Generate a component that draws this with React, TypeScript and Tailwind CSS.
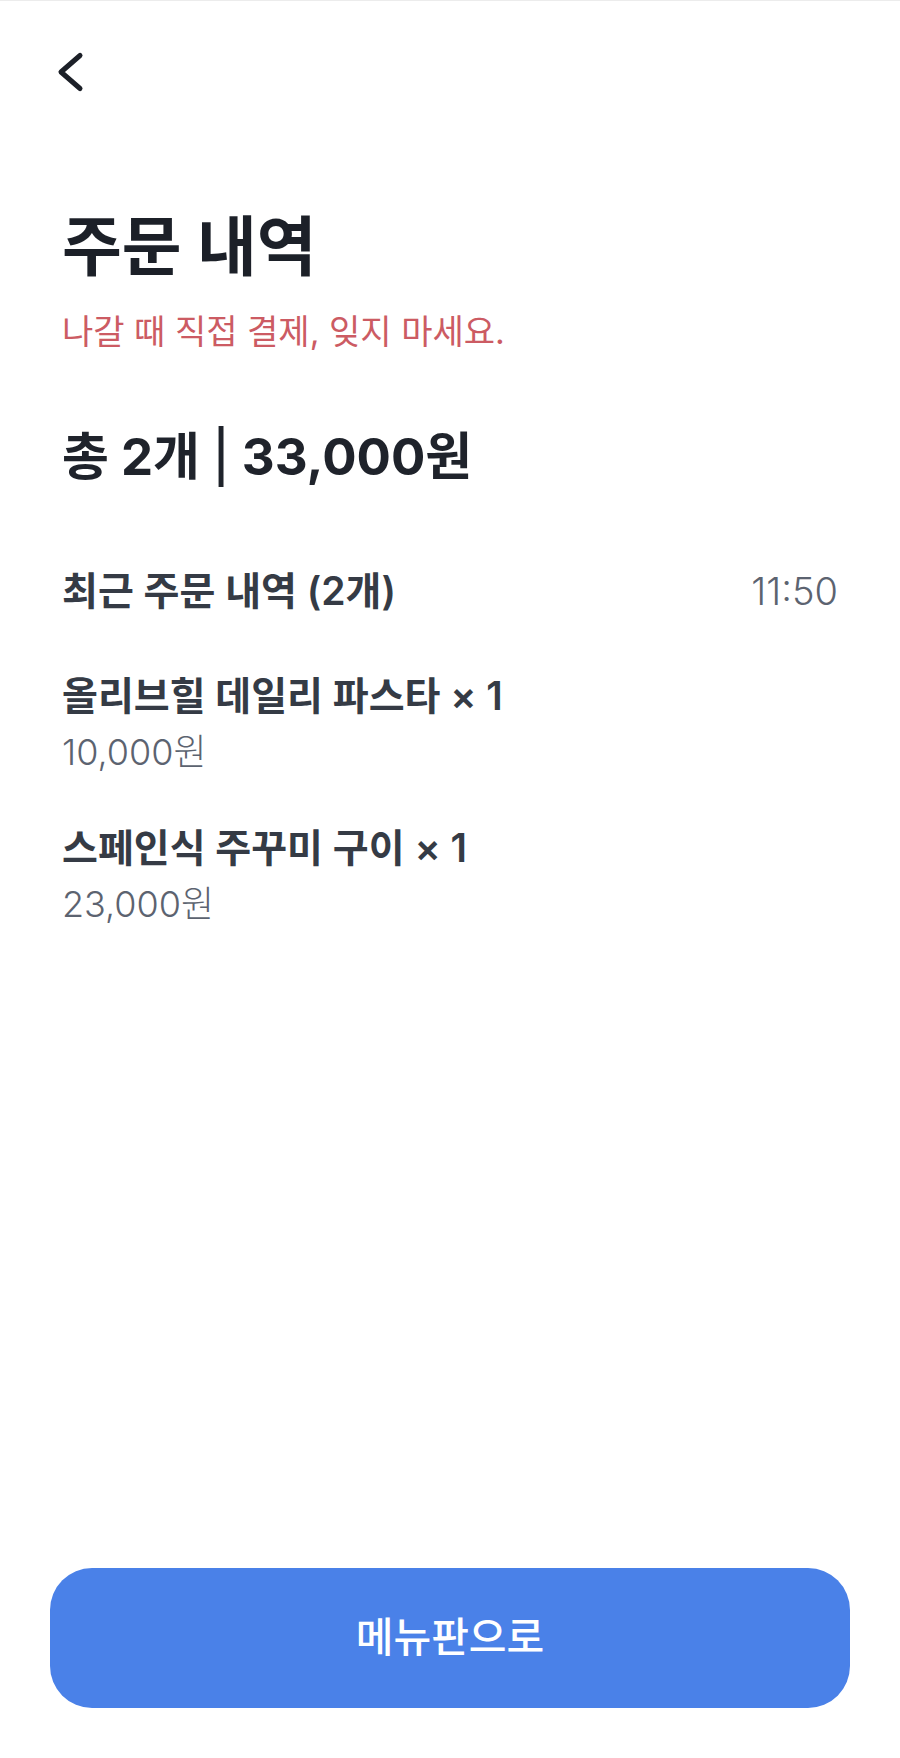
import React from "react";

const orders = [
  { name: "올리브힐 데일리 파스타", qty: 1, price: "10,000원" },
  { name: "스페인식 주꾸미 구이", qty: 1, price: "23,000원" },
];

const App: React.FC = () => {
  return (
    <div className="min-h-[1758px] bg-white border-t border-[#ececec] flex flex-col font-['Inter','Noto_Sans_CJK_KR',sans-serif]">
      {/* Top bar */}
      <header className="pl-[55px] pt-[50px]">
        <button className="block w-[32px] h-[42px]" aria-label="뒤로">
          <svg width="32" height="42" viewBox="0 0 32 42" fill="none">
            <path
              d="M25 4.5 L6 21 L25 37.5"
              stroke="#1c2028"
              strokeWidth="5"
              strokeLinecap="round"
              strokeLinejoin="round"
            />
          </svg>
        </button>
      </header>

      <main className="px-[62px] flex flex-col">
        <h1 className="mt-[118px] text-[65px] leading-[72px] font-bold text-[#1c2028]">
          주문 내역
        </h1>
        <p className="mt-[29px] text-[34px] leading-[40px] text-[#cc5b63]">
          나갈 때 직접 결제, 잊지 마세요.
        </p>

        <p className="mt-[75px] text-[51px] leading-[60px] font-bold text-[#1f232b]">
          총 2개 <span className="font-medium">|</span> 33,000원
        </p>

        {/* Recent orders */}
        <section className="mt-[82px] flex flex-col">
          <div className="flex items-center justify-between">
            <h2 className="text-[39px] leading-[44px] font-semibold text-[#353b45]">
              최근 주문 내역 (2개)
            </h2>
            <span className="text-[38px] leading-[44px] font-light text-[#5c6370]">
              11:50
            </span>
          </div>

          <ul className="flex flex-col">
            {orders.map((item, i) => (
              <li key={i} className={i === 0 ? "mt-[61px]" : "mt-[54px]"}>
                <p className="text-[39px] leading-[44px] font-semibold text-[#353b45]">
                  {item.name} × {item.qty}
                </p>
                <p className="mt-[14px] text-[36px] leading-[40px] font-light text-[#5c6370]">
                  {item.price}
                </p>
              </li>
            ))}
          </ul>
        </section>
      </main>

      <div className="mt-auto px-[50px] pb-[50px]">
        <button className="w-full h-[140px] rounded-[42px] bg-[#4a81e8] text-white text-[41px] font-medium">
          메뉴판으로
        </button>
      </div>
    </div>
  );
};

export default App;
